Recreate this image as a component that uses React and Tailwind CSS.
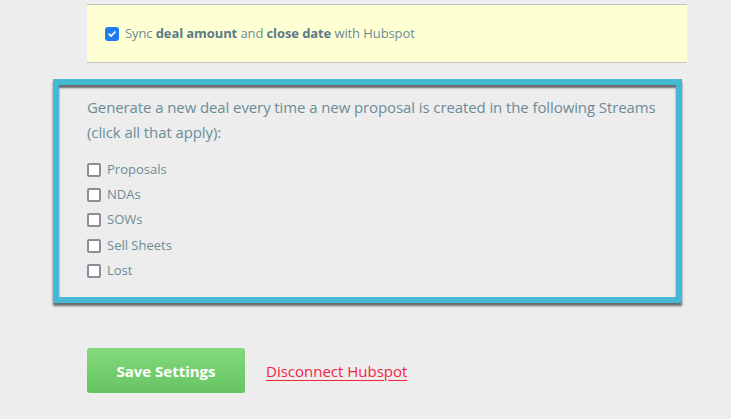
import React from 'react';

const font = { fontFamily: '"Open Sans", "Liberation Sans", sans-serif' };

const Box = ({ checked }) =>
  checked ? (
    <span className="flex h-[14px] w-[14px] shrink-0 items-center justify-center rounded-[3px] bg-[#1d7cf2]">
      <svg viewBox="0 0 12 12" className="h-[10px] w-[10px]" fill="none" stroke="white" strokeWidth="2" strokeLinecap="round" strokeLinejoin="round">
        <path d="M2.5 6.2l2.4 2.4 4.6-5" />
      </svg>
    </span>
  ) : (
    <span className="h-[14px] w-[14px] shrink-0 rounded-[2px] border-2 border-[#8e8b9b] bg-white" />
  );

const streams = ['Proposals', 'NDAs', 'SOWs', 'Sell Sheets', 'Lost'];

export default function App() {
  return (
    <div className="min-h-[419px] w-full bg-[#ededed] pt-[4px] text-[#6b8c97]" style={font}>
      {/* sync notice */}
      <div className="ml-[87px] flex h-[59px] w-[600px] items-center gap-[6px] border-y border-[#c2c2c2] bg-[#ffffd4] pl-[18px] text-[13px] tracking-[-0.1px]">
        <Box checked />
        <span>
          Sync <b className="font-bold text-[#5b7b86]">deal amount</b> and <b className="font-bold text-[#5b7b86]">close date</b> with Hubspot
        </span>
      </div>

      {/* streams */}
      <div className="ml-[53px] mt-[16px] w-[629px] border-[6px] border-[#45b8d4] pb-[14px] pl-[28px] pt-[10px] shadow-[0_3px_2px_rgba(0,0,0,0.55),inset_0_3px_2px_rgba(0,0,0,0.55)]">
        <p className="text-[15px] leading-[25px] tracking-[-0.1px]">
          Generate a new deal every time a new proposal is created in the following Streams
          <br />
          (click all that apply):
        </p>
        <div className="mt-[12px] flex flex-col">
          {streams.map((s) => (
            <label key={s} className="flex h-[25.3px] items-center gap-[6px] text-[13px]">
              <Box />
              <span>{s}</span>
            </label>
          ))}
        </div>
      </div>

      {/* actions */}
      <div className="ml-[87px] mt-[45px] flex items-center gap-[21px]">
        <button className="h-[45px] w-[158px] rounded-[3px] bg-gradient-to-b from-[#82da7c] to-[#67c462] text-[15px] font-bold text-white">
          Save Settings
        </button>
        <a href="#" className="text-[15px] text-[#f0263f] underline underline-offset-[3px]">
          Disconnect Hubspot
        </a>
      </div>
    </div>
  );
}
